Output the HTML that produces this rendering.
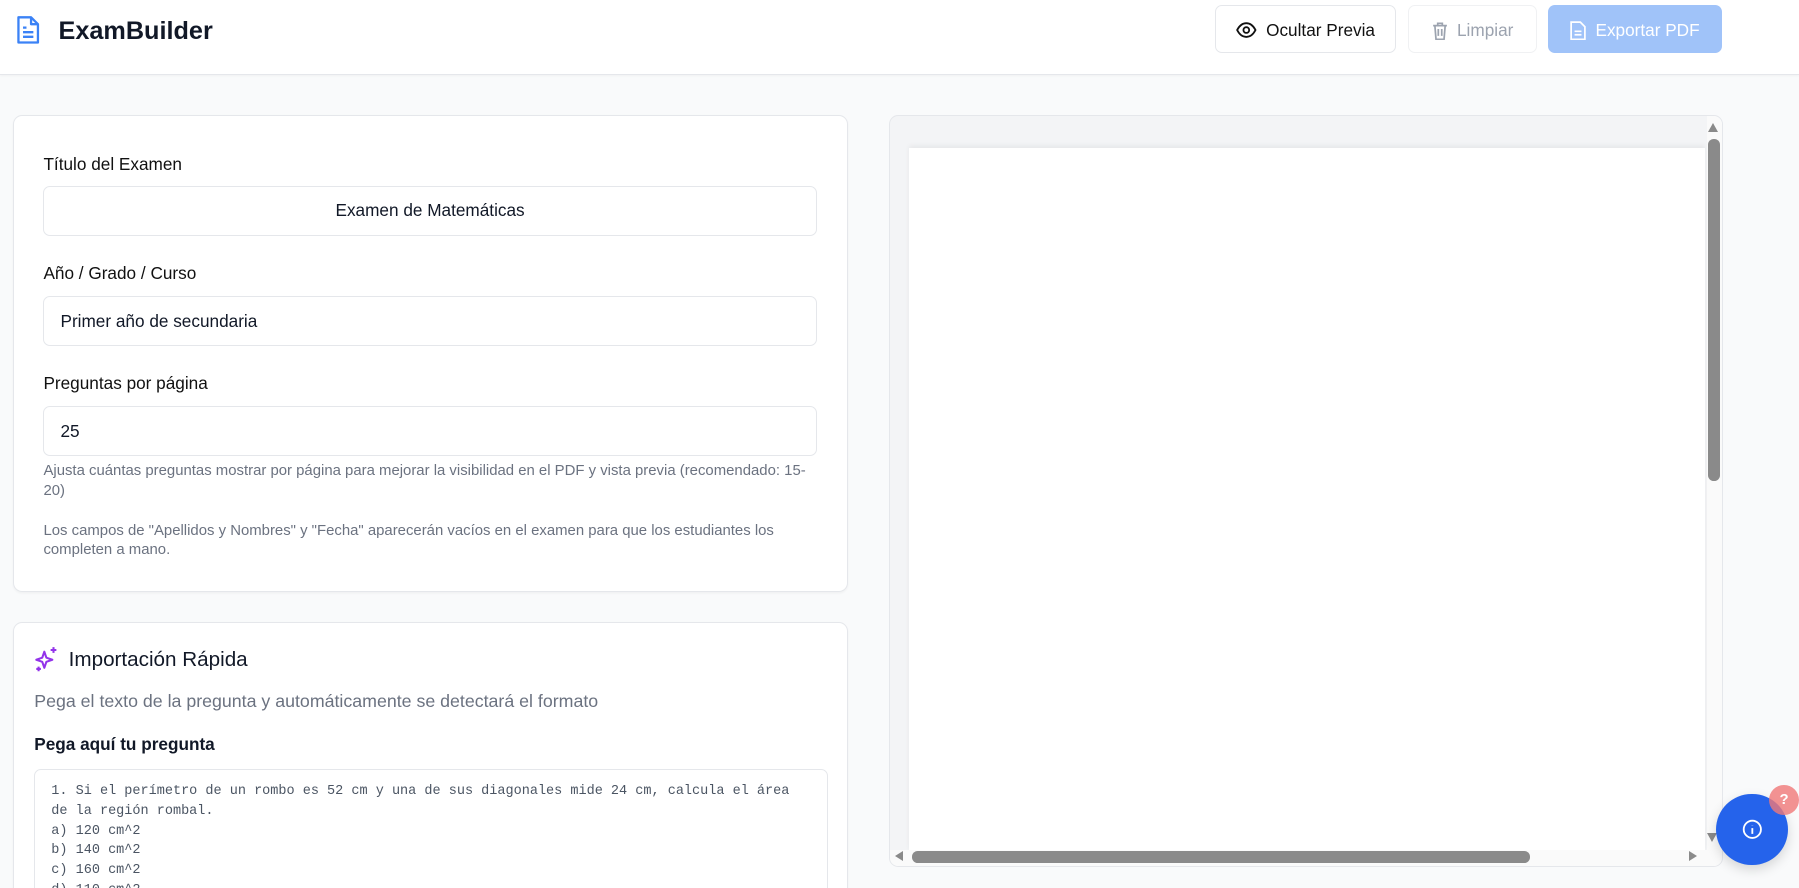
<!DOCTYPE html>
<html><head><meta charset="utf-8">
<style>
*{box-sizing:border-box;margin:0;padding:0}
html,body{width:1568px;height:774px;overflow:hidden}
html{zoom:1.14732}
body{background:#f9fafb;font-family:"Liberation Sans",sans-serif;color:#111827;position:relative}
.abs{position:absolute}
header{position:absolute;left:0;top:0;width:1568px;height:65px;background:#fff;border-bottom:1px solid #e5e7eb;box-shadow:0 1px 2px rgba(0,0,0,.04)}
.btn{position:absolute;top:4px;height:42px;border-radius:6px;display:flex;align-items:center;justify-content:center;gap:8px;font-size:15px;font-weight:500;padding-top:3px}
.card{position:absolute;background:#fff;border:1px solid #e5e7eb;border-radius:8px;box-shadow:0 1px 2px rgba(0,0,0,.04)}
.lbl{position:absolute;left:26px;font-size:15px;font-weight:500;color:#111}
.inp{position:absolute;left:26px;width:674px;height:44px;border:1px solid #e5e7eb;border-radius:6px;font-size:15px;display:flex;align-items:center;padding-left:14px}
.help{position:absolute;left:26px;width:672px;font-size:13px;color:#6b7280;line-height:17px}
</style></head><body>
<header>
<svg class="abs" style="left:13px;top:13px" width="24" height="26" viewBox="0 0 24 26" fill="none" stroke="#3b82f6" stroke-width="2" stroke-linejoin="round"><path d="M3 2h11l6 6v16H3z"/><path d="M14 2v6h6"/><path d="M7 11h3M7 15h9M7 19h9"/></svg>
<div class="abs" style="left:51px;top:15px;font-size:22px;font-weight:700">ExamBuilder</div>
<div class="btn" style="left:1059px;width:158px;border:1px solid #e5e7eb;background:#fff;color:#111">
<svg width="18" height="14" viewBox="0 0 18 14" fill="none" stroke="#111" stroke-width="1.6"><path d="M1 7C3 3 6 1 9 1s6 2 8 6c-2 4-5 6-8 6S3 11 1 7z"/><circle cx="9" cy="7" r="2.5"/></svg>Ocultar Previa</div>
<div class="btn" style="left:1227px;width:113px;border:1px solid #f0f1f3;background:#fff;color:#9ca3af">
<svg width="14" height="17" viewBox="0 0 14 17" fill="none" stroke="#9ca3af" stroke-width="1.5"><path d="M1 4h12M5 4V2h4v2M2.5 4l1 12h7l1-12M5.5 7v6M8.5 7v6"/></svg>Limpiar</div>
<div class="btn" style="left:1349px;width:152px;background:#a0c3f9;color:#fff">
<svg width="14" height="17" viewBox="0 0 14 17" fill="none" stroke="#fff" stroke-width="1.5"><path d="M1 1h8l4 4v11H1z"/><path d="M4 9h6M4 12h6"/></svg>Exportar PDF</div>
</header>

<div class="card" style="left:11px;top:100px;width:728px;height:416px">
<div class="lbl" style="top:33px">Título del Examen</div>
<div class="inp" style="top:61px;justify-content:center;padding:0">Examen de Matemáticas</div>
<div class="lbl" style="top:128px">Año / Grado / Curso</div>
<div class="inp" style="top:157px">Primer año de secundaria</div>
<div class="lbl" style="top:224px">Preguntas por página</div>
<div class="inp" style="top:253px">25</div>
<div class="help" style="top:302px;width:668px">Ajusta cuántas preguntas mostrar por página para mejorar la visibilidad en el PDF y vista previa (recomendado: 15-20)</div>
<div class="help" style="top:354px;width:665px">Los campos de "Apellidos y Nombres" y "Fecha" aparecerán vacíos en el examen para que los estudiantes los completen a mano.</div>
</div>

<div class="card" style="left:11px;top:542px;width:728px;height:250px">
<svg class="abs" style="left:18px;top:20px" width="22" height="24" viewBox="0 0 22 24" fill="none" stroke="#9333ea" stroke-width="1.8" stroke-linejoin="round"><path d="M9 5l1.8 5.2L16 12l-5.2 1.8L9 19l-1.8-5.2L2 12l5.2-1.8z"/><path d="M17 1v5M14.5 3.5h5M4 18v4M2 20h4"/></svg>
<div class="abs" style="left:48px;top:22px;font-size:18px;font-weight:500">Importación Rápida</div>
<div class="abs" style="left:18px;top:59px;font-size:15.5px;color:#6b7280">Pega el texto de la pregunta y automáticamente se detectará el formato</div>
<div class="abs" style="left:18px;top:97px;font-size:15px;font-weight:700">Pega aquí tu pregunta</div>
<div class="abs" style="left:18px;top:127px;width:692px;height:200px;border:1px solid #e5e7eb;border-radius:6px;padding:11px 14px;font-family:'Liberation Mono',monospace;font-size:11.8px;line-height:17.2px;color:#4b5563;white-space:pre">1. Si el perímetro de un rombo es 52 cm y una de sus diagonales mide 24 cm, calcula el área
de la región rombal.
a) 120 cm^2
b) 140 cm^2
c) 160 cm^2
d) 110 cm^2</div>
</div>

<div class="abs" style="left:775px;top:100px;width:727px;height:656px;border:1px solid #e5e7eb;border-radius:8px;background:#f3f4f6;overflow:hidden">
<div class="abs" style="left:16px;top:28px;width:694px;height:614px;background:#fff;box-shadow:0 -2px 4px rgba(0,0,0,.05)"></div>
<div class="abs" style="left:712px;top:0;width:14px;height:656px;background:#fafafa"></div>
<div class="abs" style="left:0;top:640px;width:712px;height:14px;background:#fafafa"></div>
<div class="abs" style="left:713px;top:20px;width:10px;height:298px;background:#8a8a8a;border-radius:5px"></div>
<div class="abs" style="left:19px;top:641px;width:539px;height:10px;background:#8a8a8a;border-radius:5px"></div>
<div class="abs" style="left:713px;top:6px;border:5px solid transparent;border-bottom:8px solid #8a8a8a;border-top:0"></div>
<div class="abs" style="left:712px;top:625px;border:5px solid transparent;border-top:8px solid #8a8a8a;border-bottom:0"></div>
<div class="abs" style="left:4px;top:641px;border:5px solid transparent;border-right:7px solid #8a8a8a;border-left:0"></div>
<div class="abs" style="left:696px;top:641px;border:5px solid transparent;border-left:7px solid #8a8a8a;border-right:0"></div>
</div>

<div class="abs" style="left:1496px;top:692px;width:62px;height:62px;border-radius:50%;background:#2563eb;box-shadow:0 4px 10px rgba(0,0,0,.15);display:flex;align-items:center;justify-content:center">
<svg width="18" height="18" viewBox="0 0 18 18" fill="none" stroke="#fff" stroke-width="1.6"><circle cx="9" cy="9" r="7.5"/><path d="M9 8v5M9 5.2v.3"/></svg></div>
<div class="abs" style="left:1542px;top:684px;width:26px;height:26px;border-radius:50%;background:rgba(240,120,120,.8);color:#fff;font-size:13px;font-weight:700;display:flex;align-items:center;justify-content:center">?</div>
</body></html>
